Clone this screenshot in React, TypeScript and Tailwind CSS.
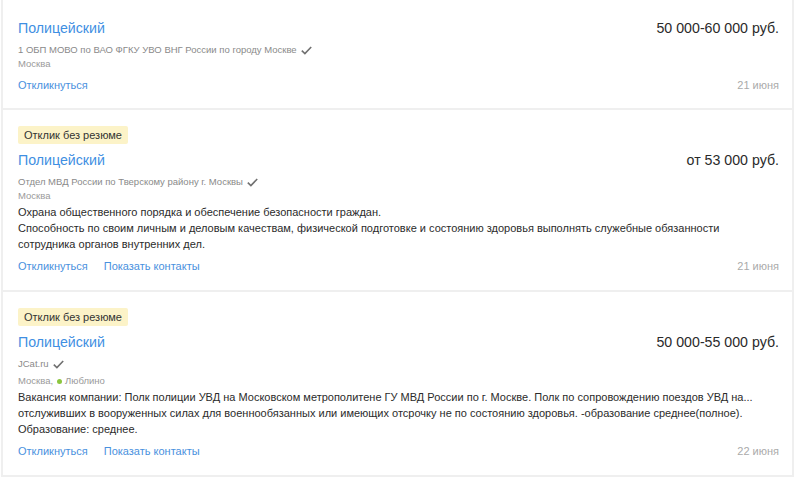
import React from 'react';

type Vacancy = {
  badge?: boolean;
  title: string;
  salary: string;
  company: string;
  city: string;
  metro?: string;
  description?: string[];
  contacts?: boolean;
  date: string;
};

const vacancies: Vacancy[] = [
  {
    title: 'Полицейский',
    salary: '50 000-60 000 руб.',
    company: '1 ОБП МОВО по ВАО ФГКУ УВО ВНГ России по городу Москве',
    city: 'Москва',
    date: '21 июня',
  },
  {
    badge: true,
    title: 'Полицейский',
    salary: 'от 53 000 руб.',
    company: 'Отдел МВД России по Тверскому району г. Москвы',
    city: 'Москва',
    description: [
      'Охрана общественного порядка и обеспечение безопасности граждан.',
      'Способность по своим личным и деловым качествам, физической подготовке и состоянию здоровья выполнять служебные обязанности',
      'сотрудника органов внутренних дел.',
    ],
    contacts: true,
    date: '21 июня',
  },
  {
    badge: true,
    title: 'Полицейский',
    salary: '50 000-55 000 руб.',
    company: 'JCat.ru',
    city: 'Москва',
    metro: 'Люблино',
    description: [
      'Вакансия компании: Полк полиции УВД на Московском метрополитене ГУ МВД России по г. Москве. Полк по сопровождению поездов УВД на...',
      'отслуживших в вооруженных силах для военнообязанных или имеющих отсрочку не по состоянию здоровья. -образование среднее(полное).',
      'Образование: среднее.',
    ],
    contacts: true,
    date: '22 июня',
  },
];

const Check = () => (
  <svg width="11" height="9" viewBox="0 0 11 9" className="ml-[4px] block">
    <path d="M0.8 4.6 L3.9 7.6 L10.2 1" fill="none" stroke="#707070" strokeWidth="1.6" />
  </svg>
);

const VacancyCard = ({ v, first }: { v: Vacancy; first?: boolean }) => (
  <div className={`bg-white pl-[15px] pr-[13px] ${first ? 'pt-[18px] pb-[16px]' : 'pt-[16px] pb-[17px]'} border-b-2 border-[#efefef]`}>
    {v.badge && (
      <div className="mb-[6px] w-fit h-[18px] rounded-[2px] bg-[#fcf3c8] px-[6px] text-[11px] leading-[18px] text-[#333]">
        Отклик без резюме
      </div>
    )}
    <div className="flex items-center justify-between h-[20px]">
      <span className="text-[14.2px] leading-[20px] text-[#3f8fe2]">{v.title}</span>
      <span className="text-[14.2px] leading-[20px] text-[#2a2a2a]">{v.salary}</span>
    </div>
    <div className="mt-[5px] flex items-center text-[9.5px] leading-[14px] text-[#8a8a8a]">
      {v.company}
      <Check />
    </div>
    <div className={`flex items-center text-[9.5px] leading-[14px] text-[#9a9a9a] ${v.metro ? 'mt-[3px]' : ''}`}>
      {v.city}
      {v.metro && (
        <>
          ,<span className="ml-[4px] mr-[3px] inline-block h-[5px] w-[5px] rounded-full bg-[#8cc63f]" />
          {v.metro}
        </>
      )}
    </div>
    {v.description && (
      <div className="mt-[1px] whitespace-nowrap text-[11px] leading-[16px] text-[#2b2b2b]">
        {v.description.map((d, i) => (
          <div key={i}>{d}</div>
        ))}
      </div>
    )}
    <div className="mt-[7px] flex items-center justify-between text-[11px] leading-[14px]">
      <div className="flex gap-[16px] text-[#4a91de]">
        <span>Откликнуться</span>
        {v.contacts && <span>Показать контакты</span>}
      </div>
      <span className="text-[#aaaaaa]">{v.date}</span>
    </div>
  </div>
);

export default function App() {
  return (
    <div className="h-[479px] w-[800px] overflow-hidden bg-white" style={{ fontFamily: '"Liberation Sans", Arial, sans-serif' }}>
      <div className="ml-[1px] w-[793px] border-x-2 border-[#efefef]">
        {vacancies.map((v, i) => (
          <VacancyCard key={i} v={v} first={i === 0} />
        ))}
      </div>
    </div>
  );
}
